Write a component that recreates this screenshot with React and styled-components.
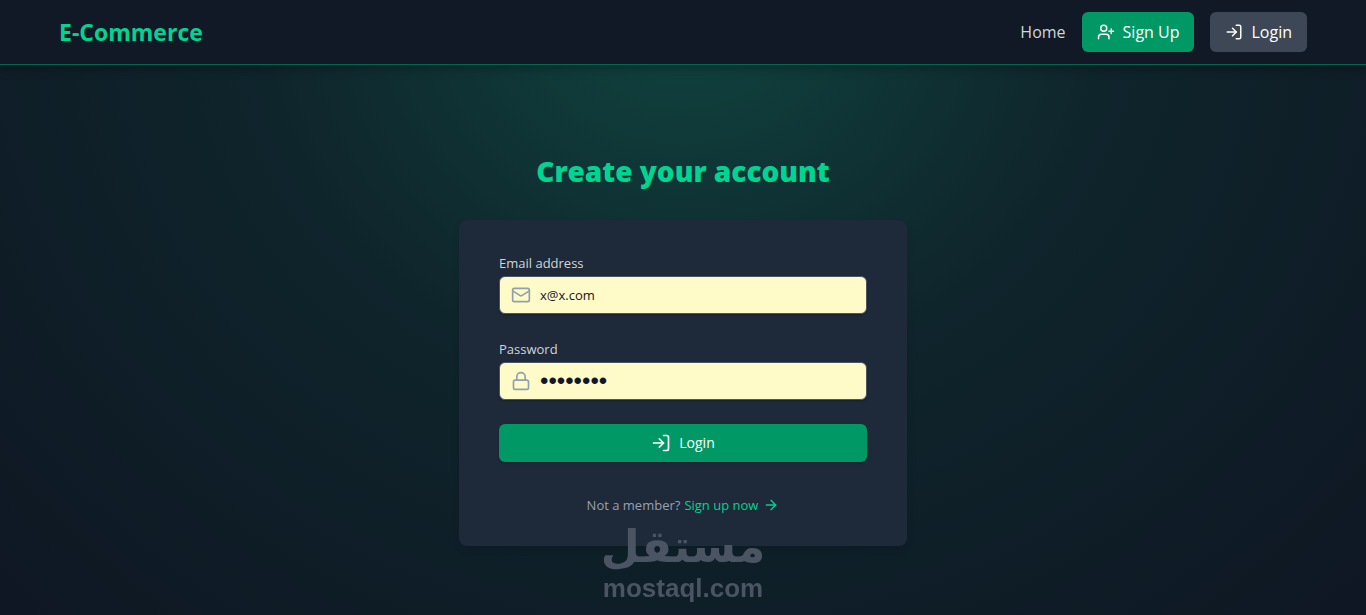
import React, { useState } from 'react'
import styled, { createGlobalStyle } from 'styled-components'
import { UserPlus, LogIn, Mail, Lock, ArrowRight } from 'lucide-react'

const GlobalStyle = createGlobalStyle`
  *, *::before, *::after {
    box-sizing: border-box;
  }

  body {
    margin: 0;
    background: #101927;
    color: #fff;
    font-family: 'Open Sans', 'Noto Sans', sans-serif;
    font-size: 16px;
    line-height: 24px;
  }

  h1, h2, p {
    margin: 0;
  }

  a {
    color: inherit;
    text-decoration: none;
  }
`

const Page = styled.div`
  display: flex;
  flex-direction: column;
  min-height: 100vh;
  background: radial-gradient(
    ellipse at top,
    rgba(16, 185, 129, 0.27) 0%,
    rgba(10, 80, 60, 0.2) 45%,
    rgba(0, 0, 0, 0.1) 100%
  );
`

const Header = styled.header`
  background: #101925;
  border-bottom: 1px solid #04664e;
  box-shadow: 0 4px 10px rgba(0, 0, 0, 0.25);
`

const HeaderInner = styled.div`
  display: flex;
  align-items: center;
  justify-content: space-between;
  max-width: 1280px;
  margin: 0 auto;
  padding: 12px 16px;
`

const Brand = styled.a`
  color: #00d492;
  font-size: 23px;
  font-weight: 700;
  line-height: 32px;
`

const Nav = styled.nav`
  display: flex;
  align-items: center;
  gap: 16px;
`

const NavLink = styled.a`
  color: #d1d5dc;
`

const NavButton = styled.button`
  display: flex;
  align-items: center;
  gap: 8px;
  height: 40px;
  padding: 0 15px;
  border: none;
  border-radius: 6px;
  background: ${({ $primary }) => ($primary ? '#009966' : '#3d4756')};
  color: #fff;
  font: inherit;
  cursor: pointer;
`

const Main = styled.main`
  display: flex;
  flex: 1;
  flex-direction: column;
  align-items: center;
  padding: 88px 16px 10px;
`

const Title = styled.h2`
  margin-bottom: 31px;
  color: #00d492;
  font-size: 28px;
  font-weight: 800;
  line-height: 36px;
  text-align: center;
`

const Card = styled.div`
  width: 100%;
  max-width: 448px;
  padding: 32px 40px 30px;
  border-radius: 8px;
  background: #1e2939;
  box-shadow: 0 4px 6px rgba(0, 0, 0, 0.1);
  font-size: 13px;
  line-height: 22px;
`

const Form = styled.form`
  display: flex;
  flex-direction: column;
  gap: 24px;
`

const Label = styled.label`
  display: block;
  margin-bottom: 2px;
  color: #d1d5dc;
`

const InputBox = styled.div`
  display: flex;
  align-items: center;
  gap: 9px;
  height: 38px;
  padding: 0 11px;
  border: 1px solid #4a5565;
  border-radius: 6px;
  background: #fffbc8;
  box-shadow: 0 1px 2px rgba(0, 0, 0, 0.25);
  color: #90a1ad;
`

const Input = styled.input`
  flex: 1;
  min-width: 0;
  padding: 0;
  border: none;
  outline: none;
  background: transparent;
  color: #101828;
  font: inherit;

  &[type='password'] {
    font-family: 'Liberation Sans', sans-serif;
    font-size: 24px;
  }
`

const SubmitButton = styled.button`
  display: flex;
  align-items: center;
  justify-content: center;
  gap: 8px;
  height: 38px;
  border: none;
  border-radius: 6px;
  background: #009966;
  box-shadow: 0 1px 2px rgba(0, 0, 0, 0.2);
  color: #fff;
  font: inherit;
  font-size: 14px;
  cursor: pointer;
`

const Footnote = styled.p`
  display: flex;
  align-items: center;
  justify-content: center;
  gap: 4px;
  margin-top: 32px;
  color: #99a1af;
`

const SignupLink = styled.a`
  display: flex;
  align-items: center;
  gap: 5px;
  color: #00d492;
`

const Watermark = styled.div`
  position: fixed;
  bottom: 13px;
  left: 50%;
  transform: translateX(-50%);
  display: flex;
  flex-direction: column;
  align-items: center;
  gap: 4px;
  color: #4a5463;
  font-weight: 700;
  pointer-events: none;
`

const WatermarkArabic = styled.span`
  font-family: 'DejaVu Sans', sans-serif;
  font-size: 45px;
  line-height: 46px;
`

const WatermarkLatin = styled.span`
  font-family: 'Liberation Sans', sans-serif;
  font-size: 26px;
  line-height: 28px;
`

const Field = ({ label, icon: FieldIcon, ...props }) => (
  <div>
    <Label htmlFor={props.id}>{label}</Label>
    <InputBox>
      <FieldIcon size={20} />
      <Input {...props} />
    </InputBox>
  </div>
)

const Navbar = () => (
  <Header>
    <HeaderInner>
      <Brand href='#'>E-Commerce</Brand>
      <Nav>
        <NavLink href='#'>Home</NavLink>
        <NavButton type='button' $primary>
          <UserPlus size={18} />
          Sign Up
        </NavButton>
        <NavButton type='button'>
          <LogIn size={18} />
          Login
        </NavButton>
      </Nav>
    </HeaderInner>
  </Header>
)

const LoginForm = () => {
  const [input, setInput] = useState({ email: 'x@x.com', password: 'password' })

  const handleChange = e => {
    setInput({ ...input, [e.target.name]: e.target.value })
  }

  const handleSubmit = e => {
    e.preventDefault()
  }

  return (
    <Card>
      <Form onSubmit={handleSubmit}>
        <Field
          id='email'
          name='email'
          type='email'
          label='Email address'
          icon={Mail}
          value={input.email}
          onChange={handleChange} />
        <Field
          id='password'
          name='password'
          type='password'
          label='Password'
          icon={Lock}
          value={input.password}
          onChange={handleChange} />
        <SubmitButton type='submit'>
          <LogIn size={20} />
          Login
        </SubmitButton>
      </Form>
      <Footnote>
        Not a member?
        <SignupLink href='#'>
          Sign up now <ArrowRight size={16} />
        </SignupLink>
      </Footnote>
    </Card>
  )
}

const App = () => (
  <>
    <GlobalStyle />
    <Page>
      <Navbar />
      <Main>
        <Title>Create your account</Title>
        <LoginForm />
      </Main>
      <Watermark>
        <WatermarkArabic lang='ar' dir='rtl'>مستقل</WatermarkArabic>
        <WatermarkLatin>mostaql.com</WatermarkLatin>
      </Watermark>
    </Page>
  </>
)

export default App
